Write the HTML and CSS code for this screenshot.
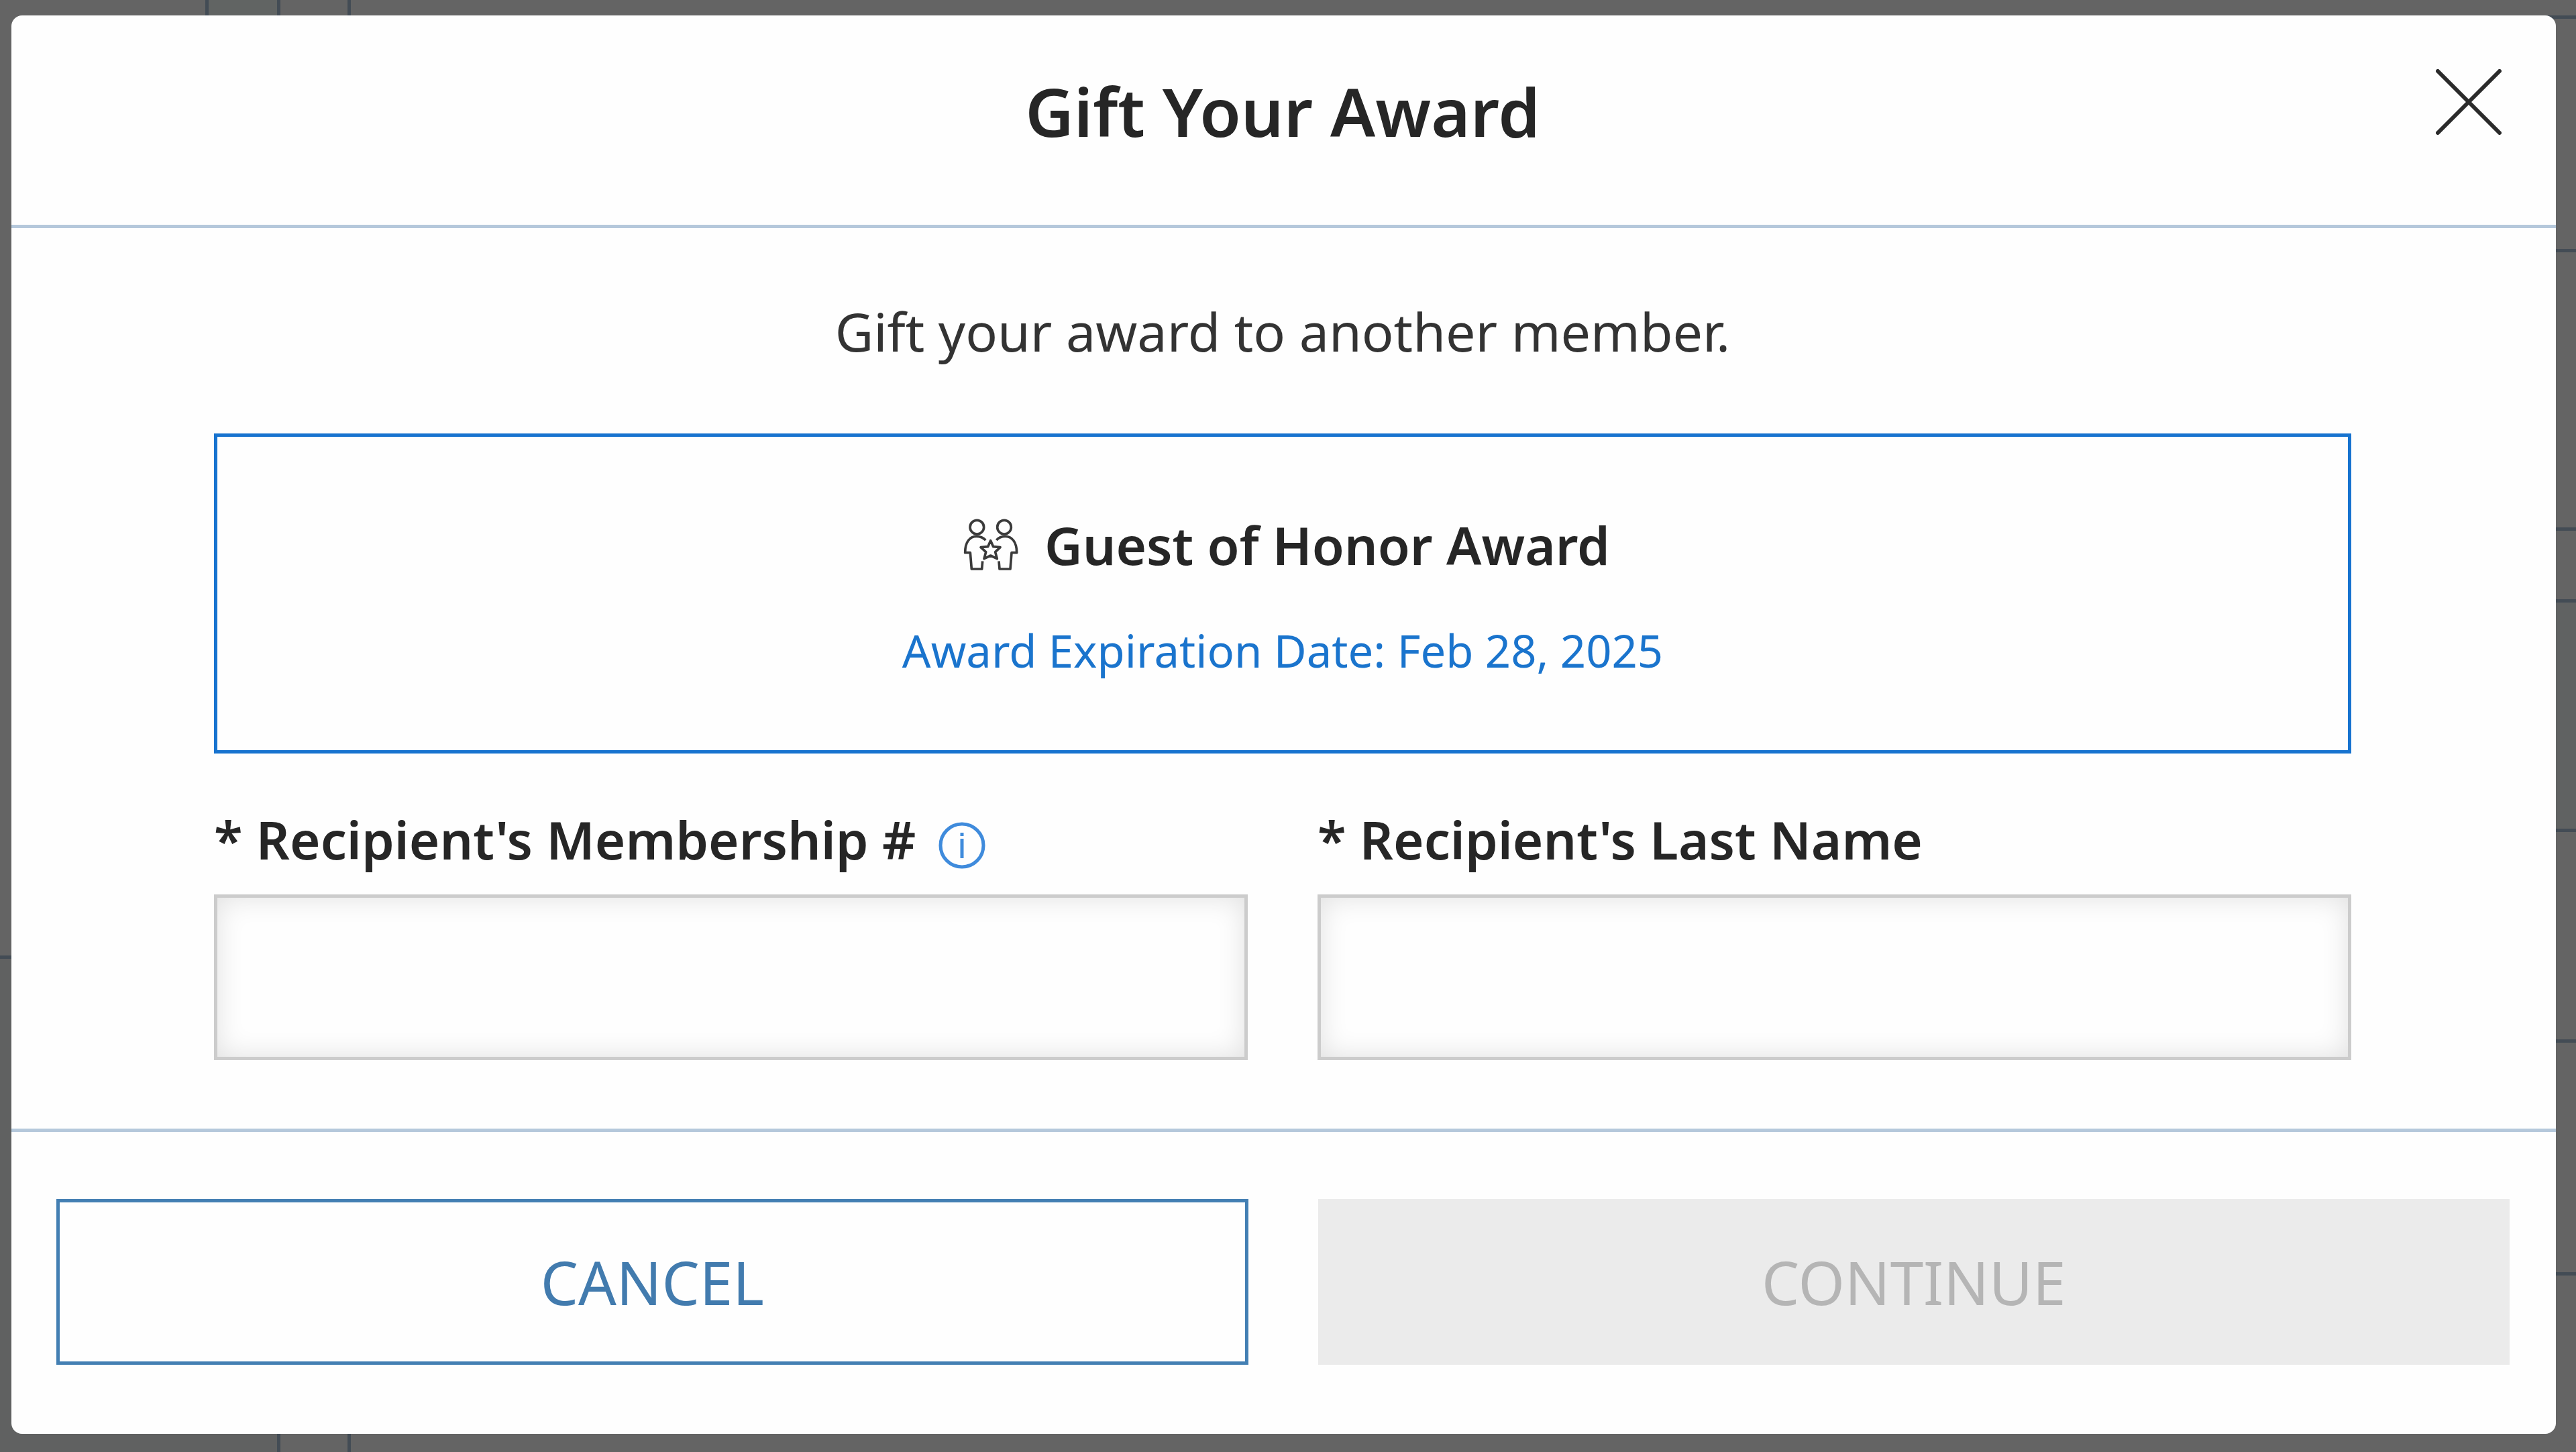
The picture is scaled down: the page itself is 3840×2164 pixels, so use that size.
FILE: index.html
```html
<!doctype html>
<html lang="en">
<head>
    <meta charset="UTF-8">
    <title>Gift Your Award</title>
    <link rel="stylesheet" href="styles.css">
</head>
<body>
<!-- dimmed page behind the dialog -->
<div class="page" aria-hidden="true">
    <div class="side">
        <div class="side-top"></div>
        <div class="side-bottom"></div>
    </div>
    <div class="gutter"></div>
    <div class="rows">
        <div class="row r1"></div>
        <div class="row r2"></div>
        <div class="row r3"></div>
        <div class="row r4 shade"></div>
        <div class="row r5"></div>
        <div class="row r6"></div>
        <div class="row r7"></div>
    </div>
</div>

<div class="modal" role="dialog" aria-labelledby="title">
    <div class="header">
        <h1 class="title" id="title">Gift Your Award</h1>
        <button type="button" class="close" aria-label="Close">
            <svg viewBox="0 0 98 98" fill="none" stroke="#2b2b2b" stroke-width="6" stroke-linecap="round">
                <path d="M3 3L95 95M95 3L3 95"/>
            </svg>
        </button>
    </div>
    <form id="gift" class="content">
        <p class="intro">Gift your award to another member.</p>
        <div class="award">
            <h2 class="award-name">
                <svg class="guests" viewBox="109 94 246 234" fill="none" stroke="#3a3a3a" stroke-width="11" stroke-linejoin="round">
                    <circle cx="170" cy="132" r="31"/>
                    <circle cx="292" cy="132" r="31"/>
                    <path d="M209 190C197 178 184 173 168 173C138 173 117 198 117 246H140L146 319H192L195 284"/>
                    <path d="M257 190C268 178 281 173 296 173C326 173 348 198 348 246H325L319 319H271L268 284"/>
                    <path d="M231 192L243 219L274 222L252 243L260 273L231 259L202 273L210 243L187 222L219 219Z"/>
                </svg>
                Guest of Honor Award
            </h2>
            <p class="expires">Award Expiration Date: Feb 28, 2025</p>
        </div>
        <div class="fields">
            <div class="field">
                <div class="label">
                    <label for="member">* Recipient's Membership #</label>
                    <button type="button" class="info" aria-label="Membership number help">
                        <svg viewBox="0 0 70 70" fill="none" stroke="#3f8bdc" stroke-width="5">
                            <circle cx="35" cy="35" r="32"/>
                            <path d="M35 25V54M35 16V21"/>
                        </svg>
                    </button>
                </div>
                <input type="text" id="member">
            </div>
            <div class="field">
                <div class="label">
                    <label for="lastname">* Recipient's Last Name</label>
                </div>
                <input type="text" id="lastname">
            </div>
        </div>
    </form>
    <div class="footer">
        <button type="button" class="btn cancel">CANCEL</button>
        <button type="submit" form="gift" class="btn continue" disabled>CONTINUE</button>
    </div>
</div>
</body>
</html>
```
FILE: styles.css
```css
*{margin:0;padding:0;box-sizing:border-box;}
body{
    position:relative;
    min-height:100vh;
    padding:23px 30px 27px 17px;
    background:#646464;
    color:#262626;
    font-family:"Noto Sans","Open Sans",sans-serif;
    font-size:78px;
    line-height:112px;
}
button{
    font-family:inherit;
    background:none;
    border:none;
    cursor:pointer;
}
svg{display:block;}

/* page behind */
.page{
    position:absolute;
    top:0;
    right:0;
    bottom:0;
    left:0;
    display:flex;
    overflow:hidden;
}
.side{
    width:418px;
    display:flex;
    flex-direction:column;
    border-right:5px solid #434c55;
}
.side-top{
    height:1429px;
    border-bottom:5px solid #434c55;
    background:linear-gradient(to right,#646464 306px,#434c55 306px,#434c55 311px,#616463 311px);
}
.side-bottom{
    flex:1;
    background:#606161;
}
.gutter{
    width:105px;
    border-right:5px solid #434c55;
}
.rows{
    flex:1;
    display:flex;
    flex-direction:column;
    padding-top:23px;
}
.row{border-top:5px solid #434c55;}
.r1{height:348px;}
.r2{height:415px;}
.r3{height:107px;}
.r4{height:342px;}
.r5{height:314px;}
.r6{height:347px;}
.r7{flex:1;}
.shade{background:#606262;}

/* dialog */
.modal{
    position:relative;
    background:#fefefe;
    border-radius:16px;
}
.header{
    position:relative;
    padding:62px 70px 90px 67px;
    border-bottom:5px solid #b5c8db;
    text-align:center;
}
.title{
    font-size:100px;
    line-height:160px;
    font-weight:600;
}
.close{
    position:absolute;
    top:80px;
    right:81px;
}
.close svg{
    width:98px;
    height:98px;
}
.content{padding:98px 305px 102px 302px;}
.intro{
    font-size:79px;
    text-align:center;
    color:#333;
}
.award{
    margin-top:96px;
    padding:105px 40px 93px;
    border:5px solid #1773cf;
    text-align:center;
}
.award-name{
    display:flex;
    justify-content:center;
    align-items:center;
    gap:39px;
    padding-left:12px;
    font-size:78px;
    font-weight:600;
}
.guests{
    width:82px;
    height:78px;
}
.expires{
    margin-top:45px;
    font-size:67px;
    color:#1a74cd;
}
.fields{
    display:grid;
    grid-template-columns:1fr 1fr;
    gap:104px;
    margin-top:72px;
}
.label{
    display:flex;
    align-items:flex-end;
    gap:34px;
    margin-bottom:26px;
    font-weight:600;
}
.info{
    height:94px;
}
.info svg{
    width:70px;
    height:70px;
}
.field input{
    display:block;
    width:100%;
    height:247px;
    padding:0 50px;
    border:5px solid #ccc;
    background:#fefefe;
    box-shadow:inset 0 0 40px rgba(0,0,0,.12);
    font:inherit;
    color:inherit;
}
.footer{
    display:grid;
    grid-template-columns:1fr 1fr;
    gap:104px;
    padding:100px 69px 103px 67px;
    border-top:5px solid #b5c8db;
}
.btn{
    height:247px;
    font-size:89px;
    line-height:112px;
}
.cancel{
    border:5px solid #437fb3;
    color:#427bae;
}
.continue{
    background:#ebebeb;
    color:#b5b5b5;
    cursor:default;
}
```
